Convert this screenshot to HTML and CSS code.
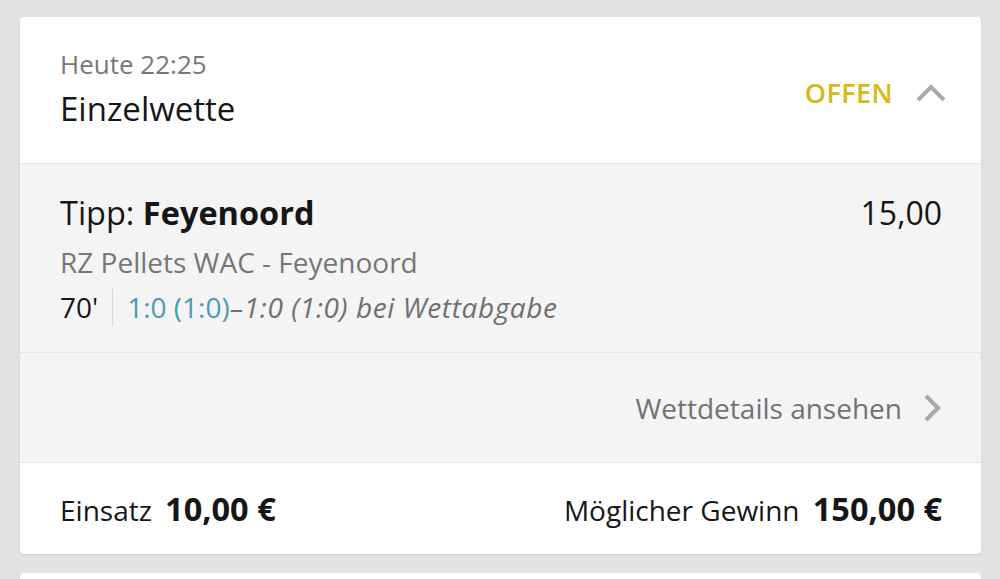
FILE: index.html
```html
<!DOCTYPE html>
<html lang="de">
<head>
<meta charset="utf-8">
<link rel="stylesheet" href="styles.css">
</head>
<body>
<div class="card">
  <div class="head">
    <div class="head-left">
      <div class="time">Heute 22:25</div>
      <div class="title">Einzelwette</div>
    </div>
    <div class="head-right">
      <span class="status">OFFEN</span>
      <svg class="chev-up" width="32" height="20" viewBox="0 0 32 20"><path d="M3 17 L16 4 L29 17" fill="none" stroke="#a9a9a9" stroke-width="4"/></svg>
    </div>
  </div>
  <div class="tip">
    <div class="tip-row">
      <div class="tip-name">Tipp: <b>Feyenoord</b></div>
      <div class="odds">15,00</div>
    </div>
    <div class="match">RZ Pellets WAC - Feyenoord</div>
    <div class="score">
      <span class="minute">70'</span>
      <span class="sep"></span>
      <span class="live">1:0 (1:0)</span><span class="placed">–1:0 (1:0) bei Wettabgabe</span>
    </div>
  </div>
  <div class="details">
    <span class="details-text">Wettdetails ansehen</span>
    <svg class="chev-right" width="20" height="30" viewBox="0 0 20 30"><path d="M4 3 L16 15 L4 27" fill="none" stroke="#a9a9a9" stroke-width="4"/></svg>
  </div>
  <div class="foot">
    <div class="stake">Einsatz <b>10,00 €</b></div>
    <div class="win">Möglicher Gewinn <b>150,00 €</b></div>
  </div>
</div>
<div class="card next"></div>
</body>
</html>
```
FILE: styles.css
```css
* { box-sizing: border-box; }
html, body {
  margin: 0;
  padding: 0;
  background: #e1e2e4;
  font-family: "Open Sans", "Lato", sans-serif;
  color: #161616;
}
body {
  padding: 17px 19px 0 20px;
  height: 579px;
  overflow: hidden;
}
.card {
  background: #fff;
  border-radius: 4px;
  box-shadow: 0 1px 2px rgba(0,0,0,0.12);
  overflow: hidden;
}
.card.next {
  margin-top: 19px;
  height: 6px;
  border-radius: 4px 4px 0 0;
}
.head {
  display: flex;
  justify-content: space-between;
  align-items: flex-start;
  padding: 32px 34px 0 40px;
  height: 147px;
  border-bottom: 1px solid #e4e4e4;
}
.time {
  font-size: 26px;
  color: #777;
  line-height: 30px;
}
.title {
  font-size: 33px;
  line-height: 40px;
  margin-top: 10px;
}
.head-right {
  display: flex;
  align-items: center;
  gap: 22px;
  margin-top: 29px;
  height: 30px;
}
.status {
  color: #d6b817;
  font-weight: 600;
  font-size: 27px;
  line-height: 30px;
  letter-spacing: 0.4px;
}
.tip {
  background: #f4f4f4;
  padding: 27px 39px 0 40px;
  height: 189px;
  border-bottom: 1px solid #e4e4e4;
}
.tip-row {
  display: flex;
  justify-content: space-between;
  align-items: baseline;
}
.tip-name {
  font-size: 32.5px;
  line-height: 40px;
}
.tip-name b { font-weight: 700; }
.odds {
  font-size: 32px;
}
.match {
  font-size: 28px;
  color: #777;
  line-height: 40px;
  margin-top: 8px;
}
.score {
  display: flex;
  align-items: center;
  font-size: 28px;
  line-height: 40px;
  margin-top: 5px;
}
.minute { color: #161616; }
.sep {
  width: 1px;
  height: 37px;
  background: #d8d8d8;
  margin: 0 14px 0 14px;
}
.live { color: #4a9cb3; }
.placed { color: #707070; font-style: italic; letter-spacing: 0.6px; }
.details {
  background: #f4f4f4;
  height: 110px;
  border-bottom: 1px solid #e4e4e4;
  display: flex;
  justify-content: flex-end;
  align-items: center;
  padding: 0 39px 0 40px;
  gap: 20px;
}
.details-text {
  font-size: 28px;
  color: #727272;
}
.foot {
  height: 91px;
  display: flex;
  justify-content: space-between;
  align-items: center;
  padding: 0 39px 0 40px;
  font-size: 28px;
}
.foot b {
  font-size: 32.5px;
  font-weight: 700;
  margin-left: 6px;
}
```
